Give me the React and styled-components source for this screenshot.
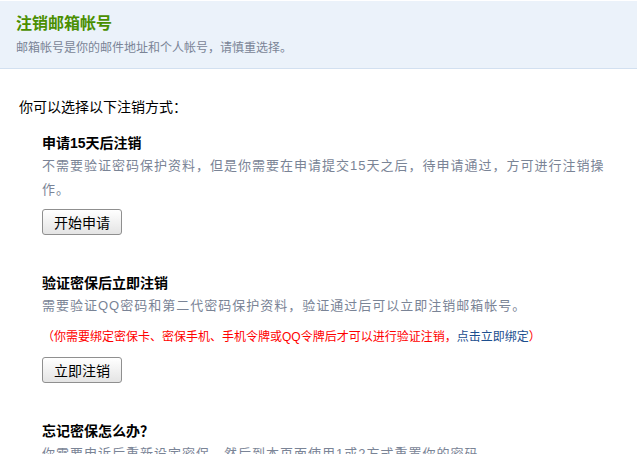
import React from 'react';
import styled, { createGlobalStyle } from 'styled-components';

const GlobalStyle = createGlobalStyle`
	body {
		margin: 0;
		background: #fff;
		font-family: "Liberation Sans", "Noto Sans CJK SC", sans-serif;
		color: #000;
	}
`

const Header = styled.div`
	margin-top: 1px;
	padding: 13px 16px 12px;
	background: #ebf2fa;
	border-bottom: 1px solid #d2e0f0;
`

const Title = styled.h1`
	margin: 0 0 6px;
	font-size: 16px;
	line-height: 20px;
	font-weight: bold;
	color: #4a8f00;
`

const Subtitle = styled.p`
	margin: 0;
	font-size: 12px;
	line-height: 16px;
	color: #7a8496;
`

const Intro = styled.p`
	margin: 28px 0 16px;
	padding-left: 19px;
	font-size: 14px;
	line-height: 20px;
`

const Section = styled.div`
	padding: 0 20px 0 42px;
	&:not(:last-child) {
		margin-bottom: 38px;
	}
`

const Heading = styled.h3`
	margin: 0;
	font-size: 14px;
	line-height: 20px;
	font-weight: bold;
`

const Desc = styled.p`
	margin: 1px 0 0;
	font-size: 13px;
	line-height: 24px;
	letter-spacing: 1px;
	color: #7a8496;
`

const Notice = styled.p`
	margin: 9px 0 0;
	font-size: 12px;
	line-height: 20px;
	color: #f00;
	a {
		color: #1d4f8f;
		text-decoration: none;
	}
`

const Button = styled.button`
	display: block;
	margin-top: ${props => props.gap}px;
	width: 80px;
	height: 26px;
	padding: 0;
	border: 1px solid #8f8f8f;
	border-radius: 3px;
	background: linear-gradient(#ffffff, #e4e4e4);
	font-family: inherit;
	font-size: 14px;
	color: #000;
	cursor: pointer;
`

const App = () => {
	return (
		<>
			<GlobalStyle />
			<Header>
				<Title>注销邮箱帐号</Title>
				<Subtitle>邮箱帐号是你的邮件地址和个人帐号，请慎重选择。</Subtitle>
			</Header>
			<Intro>你可以选择以下注销方式：</Intro>
			<Section>
				<Heading>申请15天后注销</Heading>
				<Desc>不需要验证密码保护资料，但是你需要在申请提交15天之后，待申请通过，方可进行注销操作。</Desc>
				<Button gap={7}>开始申请</Button>
			</Section>
			<Section>
				<Heading>验证密保后立即注销</Heading>
				<Desc>需要验证QQ密码和第二代密码保护资料，验证通过后可以立即注销邮箱帐号。</Desc>
				<Notice>
					（你需要绑定密保卡、密保手机、手机令牌或QQ令牌后才可以进行验证注销，<a href="#">点击立即绑定</a>）
				</Notice>
				<Button gap={10}>立即注销</Button>
			</Section>
			<Section>
				<Heading>忘记密保怎么办？</Heading>
				<Desc>你需要申诉后重新设定密保，然后到本页面使用1或2方式重置你的密码</Desc>
			</Section>
		</>
	)
}

export default App;
